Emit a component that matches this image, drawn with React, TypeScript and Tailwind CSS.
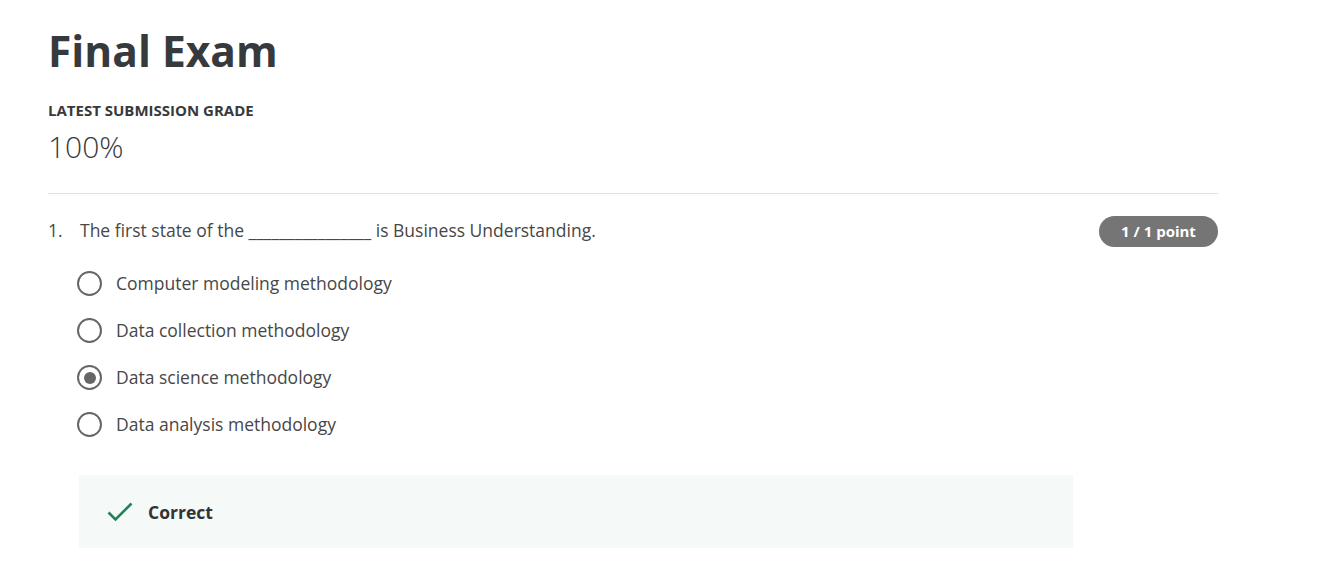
import React from "react";

const options = [
  { label: "Computer modeling methodology", checked: false },
  { label: "Data collection methodology", checked: false },
  { label: "Data science methodology", checked: true },
  { label: "Data analysis methodology", checked: false },
];

function Radio({ checked }: { checked: boolean }) {
  return (
    <span className="flex h-[25px] w-[25px] shrink-0 items-center justify-center rounded-full border-[2.5px] border-[#666666]">
      {checked && <span className="h-[12px] w-[12px] rounded-full bg-[#666666]" />}
    </span>
  );
}

export default function App() {
  return (
    <div
      className="min-h-[580px] w-full bg-white"
      style={{ fontFamily: '"Open Sans", "Liberation Sans", sans-serif' }}
    >
      <div className="w-[1218px] pl-[48px] pt-[25px]">
        <h1 className="text-[42.5px] font-bold leading-[52px] text-[#373a3c]">Final Exam</h1>
        <div className="mt-[23px] text-[15px] font-bold uppercase leading-[20px] text-[#373a3c]">
          Latest Submission Grade
        </div>
        <div className="mt-[9px] text-[30px] font-light leading-[36px] text-[#373a3c]">100%</div>
        <div className="mt-[28px] h-px w-full bg-[#e1e1e1]" />

        <div className="mt-[22px] flex h-[31px] items-center justify-between">
          <div className="flex pb-[3px] text-[17.5px] leading-[24px] text-[#474747]">
            <span className="w-[32px]">1.</span>
            <span>The first state of the ________________ is Business Understanding.</span>
          </div>
          <span className="flex h-[31px] w-[119px] items-center justify-center rounded-full bg-[#757575] text-[15px] font-bold text-white">
            1 / 1 point
          </span>
        </div>

        <div className="mt-[13px] flex flex-col pl-[29px]">
          {options.map((o) => (
            <div key={o.label} className="flex h-[47px] items-center gap-[14px]">
              <Radio checked={o.checked} />
              <span className="pb-[1px] text-[17.5px] leading-[24px] text-[#474747]">{o.label}</span>
            </div>
          ))}
        </div>

        <div className="ml-[31px] mt-[27px] flex h-[73px] w-[994px] items-center bg-[#f5f9f8] pl-[28px]">
          <svg width="26" height="20" viewBox="0 0 26 20" fill="none" className="shrink-0">
            <path d="M1.5 10.5 L8.5 17.5 L24.5 1.5" stroke="#1f8354" strokeWidth="2.6" />
          </svg>
          <span className="ml-[15px] text-[17.5px] font-bold leading-[24px] text-[#333333]">Correct</span>
        </div>
      </div>
    </div>
  );
}
